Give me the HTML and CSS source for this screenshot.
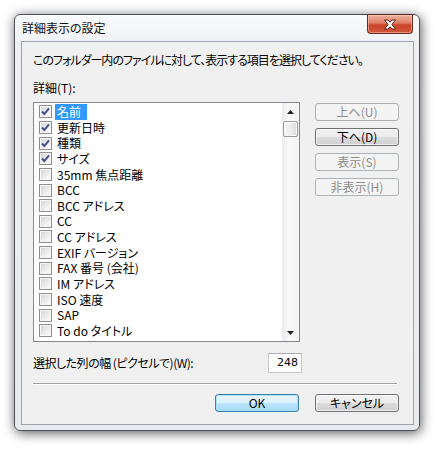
FILE: index.html
```html
<!DOCTYPE html>
<html lang="ja">
<head>
<meta charset="utf-8">
<title>詳細表示の設定</title>
<link rel="stylesheet" href="styles.css">
</head>
<body>
<div class="window">
  <div class="titlebar">
    <div class="title">詳細表示の設定</div>
    <div class="close">
      <svg width="14" height="11" viewBox="0 0 14 11"><path d="M1.5 1 H5 L7 3.3 L9 1 H12.5 L8.9 5.5 L12.5 10 H9 L7 7.7 L5 10 H1.5 L5.1 5.5 Z" fill="#fff" stroke="#5b2318" stroke-width="1" stroke-linejoin="round"/></svg>
    </div>
  </div>
  <div class="client">
    <div class="intro">このフォルダー内のファイルに対して、表示する項目を選択してください。</div>
    <div class="label">詳細(T):</div>
    <div class="main">
      <div class="listbox">
        <div class="items">
          <div class="item"><span class="cb checked"><svg width="11" height="11" viewBox="0 0 11 11"><path d="M2 5.5 L4.3 8 L9 2.3" fill="none" stroke="#3d4f85" stroke-width="1.9"/></svg></span><span class="text selected">名前</span></div>
          <div class="item"><span class="cb checked"><svg width="11" height="11" viewBox="0 0 11 11"><path d="M2 5.5 L4.3 8 L9 2.3" fill="none" stroke="#3d4f85" stroke-width="1.9"/></svg></span><span class="text">更新日時</span></div>
          <div class="item"><span class="cb checked"><svg width="11" height="11" viewBox="0 0 11 11"><path d="M2 5.5 L4.3 8 L9 2.3" fill="none" stroke="#3d4f85" stroke-width="1.9"/></svg></span><span class="text">種類</span></div>
          <div class="item"><span class="cb checked"><svg width="11" height="11" viewBox="0 0 11 11"><path d="M2 5.5 L4.3 8 L9 2.3" fill="none" stroke="#3d4f85" stroke-width="1.9"/></svg></span><span class="text">サイズ</span></div>
          <div class="item"><span class="cb"></span><span class="text">35mm 焦点距離</span></div>
          <div class="item"><span class="cb"></span><span class="text">BCC</span></div>
          <div class="item"><span class="cb"></span><span class="text">BCC アドレス</span></div>
          <div class="item"><span class="cb"></span><span class="text">CC</span></div>
          <div class="item"><span class="cb"></span><span class="text">CC アドレス</span></div>
          <div class="item"><span class="cb"></span><span class="text">EXIF バージョン</span></div>
          <div class="item"><span class="cb"></span><span class="text">FAX 番号 (会社)</span></div>
          <div class="item"><span class="cb"></span><span class="text">IM アドレス</span></div>
          <div class="item"><span class="cb"></span><span class="text">ISO 速度</span></div>
          <div class="item"><span class="cb"></span><span class="text">SAP</span></div>
          <div class="item"><span class="cb"></span><span class="text">To do タイトル</span></div>
        </div>
        <div class="scrollbar">
          <div class="arrow"><svg width="7" height="4" viewBox="0 0 7 4"><path d="M0 4 L3.5 0 L7 4 Z" fill="#222"/></svg></div>
          <div class="thumb"></div>
          <div class="track"></div>
          <div class="arrow"><svg width="7" height="4" viewBox="0 0 7 4"><path d="M0 0 L3.5 4 L7 0 Z" fill="#222"/></svg></div>
        </div>
      </div>
      <div class="side">
        <div class="btn disabled">上へ(U)</div>
        <div class="btn">下へ(D)</div>
        <div class="btn disabled">表示(S)</div>
        <div class="btn disabled">非表示(H)</div>
      </div>
    </div>
    <div class="width-row">
      <div class="width-label">選択した列の幅 (ピクセルで)(W):</div>
      <div class="field">248</div>
    </div>
    <div class="sep"></div>
    <div class="actions">
      <div class="btn default">OK</div>
      <div class="btn">キャンセル</div>
    </div>
  </div>
</div>
</body>
</html>
```
FILE: styles.css
```css
html, body {
  margin: 0;
  background: #fff;
}
body {
  padding: 14px;
  font-family: "Noto Sans CJK JP", "Noto Sans", sans-serif;
  font-size: 12px;
  font-feature-settings: "palt";
  color: #000;
}
.window {
  width: 406px;
  height: 417px;
  box-sizing: border-box;
  border: 1px solid #4b5056;
  border-radius: 6px;
  background: linear-gradient(#fafbfc, #eef0f3 30px, #e8ebee);
  box-shadow: 1px 2px 12px rgba(0, 0, 0, 0.65);
  padding: 0 5px 5px 6px;
  display: flex;
  flex-direction: column;
}
.titlebar {
  height: 26px;
  display: flex;
  justify-content: space-between;
  align-items: flex-start;
}
.title {
  padding: 5px 0 0 1px;
  line-height: 16px;
  color: #111;
}
.close {
  width: 46px;
  height: 20px;
  box-sizing: border-box;
  margin: -1px 1px 0 0;
  border: 1px solid #6b2a1e;
  border-top-color: #5a2418;
  border-radius: 0 0 4px 4px;
  background: linear-gradient(#eeb3a3, #e07e66 45%, #c9442b 55%, #d2583c);
  box-shadow: inset 0 0 0 1px rgba(255, 220, 210, 0.45);
  display: flex;
  align-items: center;
  justify-content: center;
}
.client {
  flex: 1;
  border: 1px solid #9ba4ae;
  background: #f0f0f0;
  padding: 10px 14px 0 11px;
  display: flex;
  flex-direction: column;
}
.intro {
  line-height: 16px;
  height: 16px;
  white-space: nowrap;
  letter-spacing: -1px;
}
.label {
  line-height: 16px;
  margin-top: 12px;
}
.main {
  display: flex;
  gap: 15px;
  margin-top: 6px;
}
.listbox {
  width: 268px;
  height: 240px;
  box-sizing: border-box;
  border: 1px solid #828790;
  background: #fff;
  display: flex;
}
.items {
  flex: 1;
  padding: 1px 0 0 5px;
  overflow: hidden;
}
.item {
  height: 15.65px;
  display: flex;
  align-items: center;
  white-space: nowrap;
}
.cb {
  width: 13px;
  height: 13px;
  box-sizing: border-box;
  border: 1px solid #8f8f8f;
  background: linear-gradient(135deg, #d3d3d3, #f2f2f2 70%, #fdfdfd);
  box-shadow: inset 0 0 0 1px #f6f6f6;
  margin-right: 3px;
  display: flex;
  align-items: center;
  justify-content: center;
  flex: none;
}
.text {
  line-height: 15.65px;
  padding: 0 2px;
}
.text.selected {
  background: #3399ff;
  color: #fff;
  padding-right: 6px;
}
.scrollbar {
  width: 17px;
  background: linear-gradient(90deg, #ececec, #f8f8f8 40%, #f3f3f3);
  display: flex;
  flex-direction: column;
  align-items: center;
}
.arrow {
  height: 17px;
  width: 17px;
  display: flex;
  align-items: center;
  justify-content: center;
}
.thumb {
  width: 15px;
  height: 16px;
  box-sizing: border-box;
  margin-top: 1px;
  border: 1px solid #9b9b9b;
  border-radius: 2px;
  background: linear-gradient(90deg, #f6f6f6, #ececec 50%, #dcdcdc);
  box-shadow: inset 0 0 0 1px #fbfbfb;
}
.track {
  flex: 1;
}
.side {
  display: flex;
  flex-direction: column;
  gap: 7px;
  padding-top: 1px;
}
.btn {
  width: 84px;
  height: 18px;
  box-sizing: border-box;
  border: 1px solid #707070;
  border-radius: 3px;
  background: linear-gradient(#f2f2f2, #ebebeb 50%, #dddddd 50%, #cfcfcf);
  box-shadow: inset 0 0 0 1px rgba(255, 255, 255, 0.7);
  line-height: 16px;
  text-align: center;
  color: #000;
}
.btn.disabled {
  border-color: #adb2b5;
  background: #f4f4f4;
  box-shadow: none;
  color: #8d8d8d;
}
.btn.default {
  border-color: #3c7fb1;
  background: linear-gradient(#eaf6fd, #d9f0fc 50%, #bee6fd 50%, #a7d9f5);
  box-shadow: inset 0 0 0 1px rgba(160, 220, 250, 0.8);
}
.width-row {
  display: flex;
  align-items: center;
  margin-top: 11px;
  height: 20px;
}
.width-label {
  width: 235px;
  line-height: 16px;
  letter-spacing: -0.5px;
}
.field {
  width: 34px;
  height: 20px;
  box-sizing: border-box;
  border: 1px solid #c5c8cc;
  border-top-color: #abadb3;
  background: #fff;
  text-align: right;
  padding-right: 3px;
  line-height: 18px;
  font-family: "DejaVu Sans", sans-serif;
  font-size: 11px;
}
.sep {
  margin-top: 10px;
  margin-right: 2px;
  border-top: 1px solid #a0a0a0;
  border-bottom: 1px solid #fff;
}
.actions {
  display: flex;
  justify-content: flex-end;
  gap: 16px;
  margin-top: 9px;
}
```
